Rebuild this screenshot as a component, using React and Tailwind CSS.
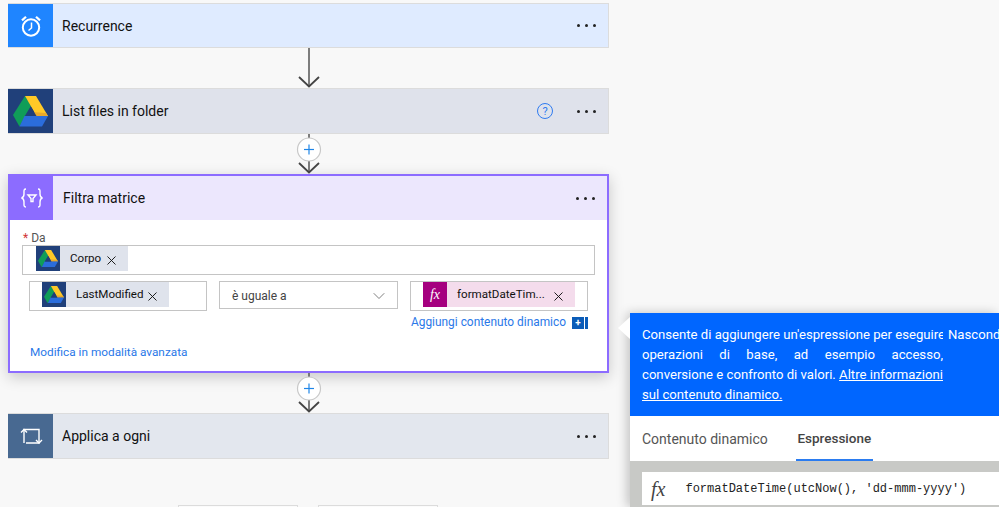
import React from "react";
import { ChevronDown, X } from "lucide-react";

const sans = "font-['Roboto',sans-serif]";

const DriveIcon = ({ size = 35 }) => (
  <svg width={size} height={(size * 31) / 35} viewBox="0 0 35 31">
    <polygon points="12,0 18,10 6.5,30.5 0,19" fill="#109d58" />
    <polygon points="12,0 23,0 35,20 23.5,20" fill="#ffc927" />
    <polygon points="18.5,16 23.5,20 35,20 33,17" fill="#e9a92a" />
    <polygon points="11.5,20 35,20 29,30.5 6.5,30.5" fill="#2b6ddb" />
    <polygon points="17.8,10.5 23.5,20 11.8,20" fill="#1f3f78" />
  </svg>
);

const MoreDots = () => (
  <div className="flex gap-[5px] mr-[12px]">
    <span className="w-[3px] h-[3px] rounded-full bg-[#222]" />
    <span className="w-[3px] h-[3px] rounded-full bg-[#222]" />
    <span className="w-[3px] h-[3px] rounded-full bg-[#222]" />
  </div>
);

// linea + freccia tra le card, con il + opzionale
const Connector = ({ height, plus }) => (
  <div className="flex justify-center" style={{ height }}>
    <svg width="30" height={height} viewBox={`0 0 30 ${height}`}>
      <line x1="15" y1="0" x2="15" y2={height - 2} stroke="#555" strokeWidth="1.5" />
      <polyline
        points={`5,${height - 11} 15,${height - 1.5} 25,${height - 11}`}
        fill="none"
        stroke="#444"
        strokeWidth="1.8"
      />
      {plus && (
        <g>
          <circle cx="15" cy="15.5" r="11.5" fill="#fff" stroke="#c8c8c8" strokeWidth="1.2" />
          <line x1="10" y1="15.5" x2="20" y2="15.5" stroke="#1f86e8" strokeWidth="1.2" />
          <line x1="15" y1="10.5" x2="15" y2="20.5" stroke="#1f86e8" strokeWidth="1.2" />
        </g>
      )}
    </svg>
  </div>
);

const StepCard = ({ icon, iconBg, headerBg, title, extra, height = "h-[45px]", titleClass = "" }) => (
  <div
    className={`flex items-stretch ${height} border-y border-r border-[#dcdcdc]`}
    style={{ backgroundColor: headerBg }}
  >
    <div
      className="w-[45px] shrink-0 flex items-center justify-center"
      style={{ backgroundColor: iconBg }}
    >
      {icon}
    </div>
    <div className={`flex-1 flex items-center pl-[9px] text-[14px] text-[#111] ${titleClass}`}>{title}</div>
    {extra}
    <div className="flex items-center">
      <MoreDots />
    </div>
  </div>
);

const Chip = ({ children, width, tile, bg = "bg-[#dfe3ec]", gap = "pl-[10px]" }) => (
  <div className={`flex items-center h-[25px] ${bg} ${width}`}>
    <div className={`w-[24px] h-[25px] flex items-center justify-center shrink-0 ${tile}`}>
      {children[0]}
    </div>
    <span className={`${gap} text-[11.6px] text-[#111] whitespace-nowrap`}>{children[1]}</span>
    <X size={15} strokeWidth={1.5} className="ml-auto mr-[9px] mt-[3px] text-[#111]" />
  </div>
);

const FxText = ({ className }) => (
  <span className={`font-['Liberation_Serif',serif] italic ${className}`}>fx</span>
);

export default function App() {
  return (
    <div className={`flex w-[999px] h-[507px] overflow-hidden bg-[#f8f8f8] ${sans}`}>
      <div className="w-[630px] shrink-0 pl-[8px] pr-[21px] pt-[3px]">
        <StepCard
          iconBg="#1f85ff"
          headerBg="#dfebff"
          title="Recurrence"
          titleClass="pt-[1px]"
          icon={
            <svg width="24" height="24" viewBox="0 0 24 24" fill="none" stroke="#fff" strokeWidth="2">
              <circle cx="12" cy="13.5" r="8.2" />
              <polyline points="12.5,8.5 12.5,14 9.5,16.5" strokeWidth="1.5" />
              <path d="M3 6.4 L7 2.8" strokeWidth="2.2" />
              <path d="M21 6.4 L17 2.8" strokeWidth="2.2" />
            </svg>
          }
        />
        <Connector height={40} />
        <StepCard
          height="h-[46px]"
          iconBg="#20407a"
          headerBg="#dfe2eb"
          title="List files in folder"
          icon={<DriveIcon />}
          extra={
            <div className="flex items-center mr-[24px]">
              <div className="w-[16px] h-[16px] rounded-full border-[1.5px] border-[#2f7bf0] flex items-center justify-center text-[11px] leading-none text-[#2f7bf0]">
                ?
              </div>
            </div>
          }
        />
        <Connector height={40} plus />

        <div className="h-[199px] border-2 border-[#8c6cff] bg-white shadow-[0_4px_14px_rgba(0,0,0,0.2)]">
          <div className="flex items-stretch h-[44px] bg-[#ece7fd]">
            <div className="w-[43px] shrink-0 bg-[#8c6cff] flex items-center justify-center">
              <svg width="24" height="22" viewBox="0 0 24 22" fill="none" stroke="#fff" strokeWidth="1.4">
                <path d="M6 2 C3.5 2 4 4 4 7 C4 9.5 3.5 10.5 1.5 11 C3.5 11.5 4 12.5 4 15 C4 18 3.5 20 6 20" />
                <path d="M18 2 C20.5 2 20 4 20 7 C20 9.5 20.5 10.5 22.5 11 C20.5 11.5 20 12.5 20 15 C20 18 20.5 20 18 20" />
                <path d="M8 8 H16 L13 11.5 V14.5 H11 V11.5 Z" />
              </svg>
            </div>
            <div className="flex-1 flex items-center pl-[10px] text-[14px] text-[#111]">Filtra matrice</div>
            <div className="flex items-center">
              <MoreDots />
            </div>
          </div>

          <div className="pl-[12px] pr-[12px] pt-[11px]">
            <div className="h-[14px] text-[12px] leading-[14px] text-[#555] pl-[1px]">
              <span className="text-[#d13438] mr-[3px]">*</span>Da
            </div>
            <div className="h-[30px] border border-[#c4c4c4] pl-[13px]">
              <Chip width="w-[92px]" tile="bg-[#20407a]">
                {[<DriveIcon size={20} key="i" />, "Corpo"]}
              </Chip>
            </div>

            <div className="flex mt-[6px] pl-[7px] pr-[7px] justify-between">
              <div className="w-[178px] h-[30px] border border-[#c4c4c4] pl-[12px]">
                <Chip width="w-[127px]" tile="bg-[#20407a]">
                  {[<DriveIcon size={20} key="i" />, "LastModified"]}
                </Chip>
              </div>
              <div className="w-[179px] h-[28px] border border-[#c4c4c4] flex items-center pl-[12px] pr-[8px] pt-[2px] text-[12px] text-[#444]">
                <span className="flex-1">è uguale a</span>
                <ChevronDown size={20} strokeWidth={0.9} className="text-[#555]" />
              </div>
              <div className="w-[178px] h-[30px] border border-[#c4c4c4] pl-[12px]">
                <Chip width="w-[152px]" tile="bg-[#a5007f]" bg="bg-[#f4dcec]">
                  {[<FxText className="text-white text-[14px]" key="i" />, "formatDateTim..."]}
                </Chip>
              </div>
            </div>

            <div className="flex justify-end items-center mt-[3px] mr-[7px] h-[17px]">
              <span className="text-[11.9px] text-[#2a78e8]">Aggiungi contenuto dinamico</span>
              <div className="ml-[6px] w-[12px] h-[12px] bg-[#0b5cb8] flex items-center justify-center text-white text-[10px] font-bold leading-none">
                +
              </div>
              <div className="ml-[1px] w-[3px] h-[12px] bg-[#0b5cb8]" />
            </div>

            <div className="mt-[13px] pl-[8px] text-[11.8px] leading-[16px] text-[#2a78e8]">
              Modifica in modalità avanzata
            </div>
          </div>
        </div>

        <Connector height={40} plus />
        <StepCard
          height="h-[46px]"
          iconBg="#486991"
          headerBg="#e3e7ee"
          title="Applica a ogni"
          icon={
            <svg width="24" height="20" viewBox="0 0 24 20" fill="none" stroke="#fff" strokeWidth="1.4">
              <path d="M5 17 V3.5 H20 V17 H7" />
              <path d="M2 6.5 L5 3.5 L8 6.5" />
              <path d="M17 14 L20 17 L23 14" />
            </svg>
          }
        />
        <div className="flex mt-[46px] pl-[170px] gap-[20px]">
          <div className="w-[120px] h-[20px] border border-[#dcdcdc] bg-[#fbfbfb]" />
          <div className="w-[120px] h-[20px] border border-[#dcdcdc] bg-[#fbfbfb]" />
        </div>
      </div>

      <div className="flex-1 min-w-0 pt-[313px]">
        <div className="relative h-[194px] bg-white shadow-[-3px_0_10px_rgba(0,0,0,0.22)] flex flex-col">
          <div className="absolute left-[-12px] top-[4px] w-0 h-0 border-y-[11px] border-y-transparent border-r-[12px] border-r-white" />
          <div className="flex h-[103px] bg-[#0066ff] pl-[12px] pt-[12px] text-[13.15px] leading-[20px] text-white">
            <div className="w-[301px] shrink-0 overflow-hidden">
              <div className="whitespace-nowrap">Consente di aggiungere un'espressione per eseguire</div>
              <div className="[text-align:justify] [text-align-last:justify]">
                operazioni di base, ad esempio accesso,
              </div>
              <div className="whitespace-nowrap">
                conversione e confronto di valori. <span className="underline">Altre informazioni</span>
              </div>
              <div className="underline">sul contenuto dinamico.</div>
            </div>
            <div className="ml-[5px] whitespace-nowrap">Nascondi</div>
          </div>
          <div className="flex h-[45px] pl-[12px] text-[14px] text-[#555]">
            <div className="flex items-center pt-[2px]">Contenuto dinamico</div>
            <div className="ml-[28px] w-[77px] pt-[2px] flex items-center justify-center font-medium text-[13.5px] text-[#444] border-b-2 border-[#2b7cf0]">
              Espressione
            </div>
          </div>
          <div className="flex-1 bg-[#c8c9c6] pl-[12px] pt-[11px]">
            <div className="h-[33px] bg-white flex items-center">
              <FxText className="ml-[9px] text-[#444] text-[20px] leading-none" />
              <span className="ml-[20px] font-['Liberation_Mono',monospace] text-[12px] text-[#222] whitespace-nowrap">
                formatDateTime(utcNow(), 'dd-mmm-yyyy')
              </span>
            </div>
          </div>
        </div>
      </div>
    </div>
  );
}
